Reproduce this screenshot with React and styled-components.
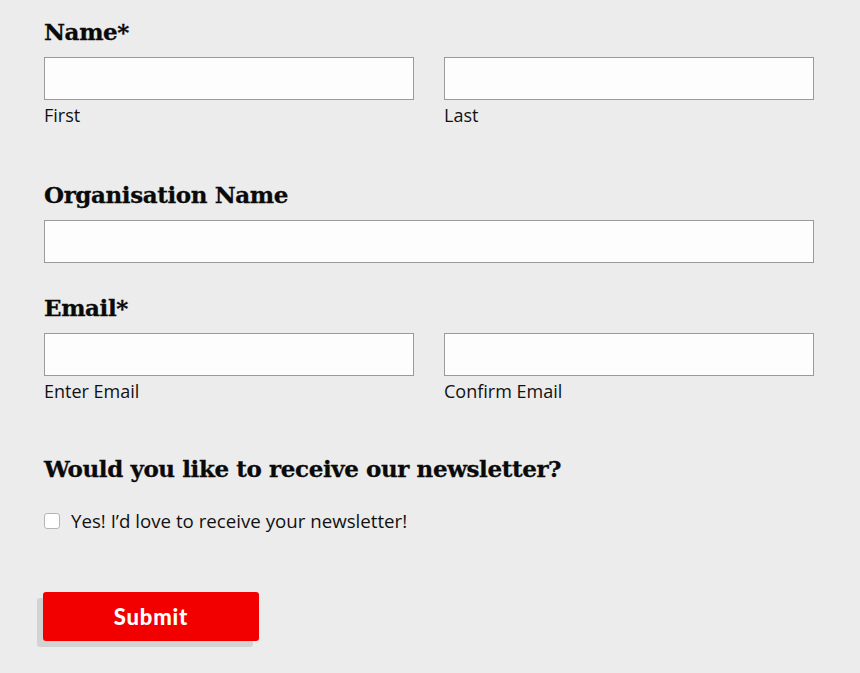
import React from 'react'
import styled, { createGlobalStyle } from 'styled-components'

const Global = createGlobalStyle`
    html, body {
        margin:0;
        background:#ececec;
    }
    body {
        font-family:"Open Sans", "Noto Sans", sans-serif;
        color:#111;
    }
`

const Form = styled.form`
    padding:14px 46px 30px 44px;
    display:flex;
    flex-direction:column;
`

const Section = styled.div`
    margin-bottom:${props => props.spacing || 0}px;
`

const Heading = styled.h2`
    font-family:"DejaVu Serif", "Liberation Serif", serif;
    font-weight:bold;
    font-size:23px;
    letter-spacing:-0.4px;
    line-height:36px;
    margin:0 0 7px 0;
    color:#0a0a0a;
    -webkit-text-stroke:0.3px #0a0a0a;
`

const Row = styled.div`
    display:grid;
    grid-template-columns:${props => props.single ? '1fr' : '1fr 1fr'};
    column-gap:30px;
`

const Field = styled.div`
    display:flex;
    flex-direction:column;
`

const Input = styled.input`
    box-sizing:border-box;
    height:43px;
    width:100%;
    border:1px solid #9a9a9a;
    background:#fdfdfd;
    margin:0;
    font-size:16px;
    padding:0 10px;
`

const Sub = styled.label`
    font-size:18px;
    line-height:24px;
    margin-top:3px;
    color:#111;
`

const Check = styled.label`
    display:flex;
    align-items:center;
    gap:11px;
    font-size:18.7px;
    margin-top:21px;
`

const Box = styled.span`
    flex:none;
    width:14px;
    height:14px;
    border:1px solid #b5b5b5;
    border-radius:3px;
    background:#fff;
`

const Button = styled.button`
    align-self:flex-start;
    margin-left:-1px;
    width:216px;
    height:49px;
    border:none;
    border-radius:3px;
    background:#f20000;
    color:#fff;
    font-family:"Lato", "Open Sans", sans-serif;
    font-weight:900;
    font-size:22px;
    letter-spacing:0.8px;
    box-shadow:-6px 6px 0 #d3d3d3;
    cursor:pointer;
`

const App = () => {
    return (
    <>
        <Global />
        <Form onSubmit={e => e.preventDefault()}>
            <Section spacing={50}>
                <Heading>Name*</Heading>
                <Row>
                    <Field><Input /><Sub>First</Sub></Field>
                    <Field><Input /><Sub>Last</Sub></Field>
                </Row>
            </Section>
            <Section spacing={27}>
                <Heading>Organisation Name</Heading>
                <Row single><Input /></Row>
            </Section>
            <Section spacing={48}>
                <Heading>Email*</Heading>
                <Row>
                    <Field><Input /><Sub>Enter Email</Sub></Field>
                    <Field><Input /><Sub>Confirm Email</Sub></Field>
                </Row>
            </Section>
            <Section spacing={59}>
                <Heading>Would you like to receive our newsletter?</Heading>
                <Check><Box />Yes! I’d love to receive your newsletter!</Check>
            </Section>
            <Button type="submit">Submit</Button>
        </Form>
    </>
    )
}

export default App
